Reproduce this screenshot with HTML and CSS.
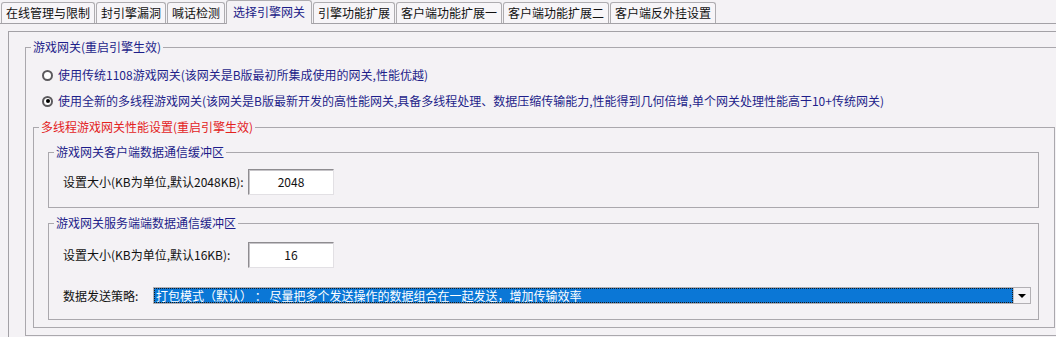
FILE: index.html
```html
<!DOCTYPE html>
<html lang="zh-CN">

<head>
    <meta charset="UTF-8">
    <title>选择引擎网关</title>
    <link rel="stylesheet" href="styles.css">
</head>

<body>
    <div class="tabs">
        <div class="tab">在线管理与限制</div>
        <div class="tab">封引擎漏洞</div>
        <div class="tab">喊话检测</div>
        <div class="tab active">选择引擎网关</div>
        <div class="tab">引擎功能扩展</div>
        <div class="tab">客户端功能扩展一</div>
        <div class="tab">客户端功能扩展二</div>
        <div class="tab">客户端反外挂设置</div>
    </div>
    <div class="page">
        <fieldset class="group outer">
            <legend>游戏网关(重启引擎生效)</legend>
            <div class="option first"><span class="radio"></span>使用传统1108游戏网关(该网关是B版最初所集成使用的网关,性能优越)</div>
            <div class="option"><span class="radio checked"></span>使用全新的多线程游戏网关(该网关是B版最新开发的高性能网关,具备多线程处理、数据压缩传输能力,性能得到几何倍增,单个网关处理性能高于10+传统网关)</div>
            <fieldset class="group perf">
                <legend class="red">多线程游戏网关性能设置(重启引擎生效)</legend>
                <fieldset class="group buffer">
                    <legend>游戏网关客户端数据通信缓冲区</legend>
                    <div class="field">
                        <label class="size-label">设置大小(KB为单位,默认2048KB):</label>
                        <div class="num-box">2048</div>
                    </div>
                </fieldset>
                <fieldset class="group buffer second">
                    <legend>游戏网关服务端端数据通信缓冲区</legend>
                    <div class="field">
                        <label class="size-label">设置大小(KB为单位,默认16KB):</label>
                        <div class="num-box">16</div>
                    </div>
                    <div class="field strategy">
                        <label class="strategy-label">数据发送策略:</label>
                        <div class="combo">
                            <div class="combo-value">打包模式（默认） ： 尽量把多个发送操作的数据组合在一起发送，增加传输效率</div>
                            <div class="combo-arrow"></div>
                        </div>
                    </div>
                </fieldset>
            </fieldset>
        </fieldset>
    </div>
</body>

</html>
```

FILE: styles.css
```css
*,
*::after,
*::before {
    box-sizing: border-box;
}

html,
body {
    margin: 0;
    padding: 0;
}

body {
    width: 1056px;
    height: 337px;
    overflow: hidden;
    background-color: #f4f2f5;
    font-family: "Noto Sans CJK SC", sans-serif;
    font-size: 12px;
    line-height: 16px;
    color: #111111;
}

/* tab strip */
.tabs {
    display: flex;
    align-items: flex-end;
    gap: 1px;
    height: 24px;
    padding-left: 1px;
    border-bottom: 1px solid #a3a1a6;
}

.tab {
    height: 21px;
    padding: 0 4px;
    line-height: 19px;
    white-space: nowrap;
    background-color: #f7f5f8;
    border: 1px solid #aeacb0;
    border-bottom: none;
    border-radius: 3px 3px 0 0;
}

.tab.active {
    height: 24px;
    margin-bottom: -1px;
    padding: 0 6px;
    line-height: 21px;
    color: #1c1c88;
    background-color: #f4f2f5;
}

/* tab page */
.page {
    height: 306px;
    margin: 7px 0 0 8px;
    border-top: 1px solid #a3a1a6;
    border-left: 1px solid #a3a1a6;
}

.group {
    margin: 0;
    padding: 0;
    min-width: 0;
    border: 1px solid #aaa8ad;
}

legend {
    margin-left: 5px;
    padding: 0 2px;
    color: #1e1e8a;
}

legend.red {
    color: #e3221d;
}

.outer {
    width: 1060px;
    margin: 7px 0 0 16px;
    padding: 0 0 7px 0;
}

.option {
    display: flex;
    align-items: center;
    gap: 5px;
    height: 16px;
    margin: 10px 0 0 16px;
    color: #1e1e8a;
    white-space: nowrap;
}

.option.first {
    margin-top: 12px;
}

.radio {
    flex: none;
    display: flex;
    align-items: center;
    justify-content: center;
    width: 11px;
    height: 11px;
    border: 2px solid #5c5a5e;
    border-radius: 50%;
    background-color: #ffffff;
}

.radio.checked::after {
    content: "";
    width: 4px;
    height: 4px;
    border-radius: 50%;
    background-color: #000000;
}

.perf {
    width: 1022px;
    margin: 10px 0 0 7px;
    padding: 0 0 7px 0;
}

.buffer {
    margin: 9px 15px 0 14px;
    padding: 0 0 12px 0;
}

.buffer.second {
    margin-top: 7px;
    padding-bottom: 15px;
}

.field {
    display: flex;
    align-items: center;
    height: 26px;
    margin: 9px 0 0 14px;
    white-space: nowrap;
}

.buffer.second .field {
    margin-top: 11px;
}

.buffer.second .field.strategy {
    height: 17px;
    margin-top: 19px;
}

.size-label {
    width: 185px;
}

.strategy-label {
    width: 90px;
}

.num-box {
    width: 86px;
    height: 26px;
    line-height: 23px;
    text-align: center;
    background-color: #ffffff;
    border: 1px solid;
    border-color: #8e8c90 #e2e0e4 #e2e0e4 #8e8c90;
    box-shadow: inset 1px 1px 0 #c6c4c8;
}

.combo {
    display: flex;
    width: 878px;
    height: 17px;
    background-color: #ffffff;
    border: 1px solid #b2b0b4;
}

.combo-value {
    flex: 1;
    padding-left: 2px;
    line-height: 15px;
    color: #ffffff;
    background-color: #0b77d6;
    outline: 1px dotted #1a1a1a;
    outline-offset: -1px;
    overflow: hidden;
}

.combo-arrow {
    display: flex;
    align-items: center;
    justify-content: center;
    width: 17px;
    background-color: #f4f2f5;
    border-left: 1px solid #c4c2c6;
}

.combo-arrow::after {
    content: "";
    border-left: 4px solid transparent;
    border-right: 4px solid transparent;
    border-top: 4px solid #000000;
}
```
